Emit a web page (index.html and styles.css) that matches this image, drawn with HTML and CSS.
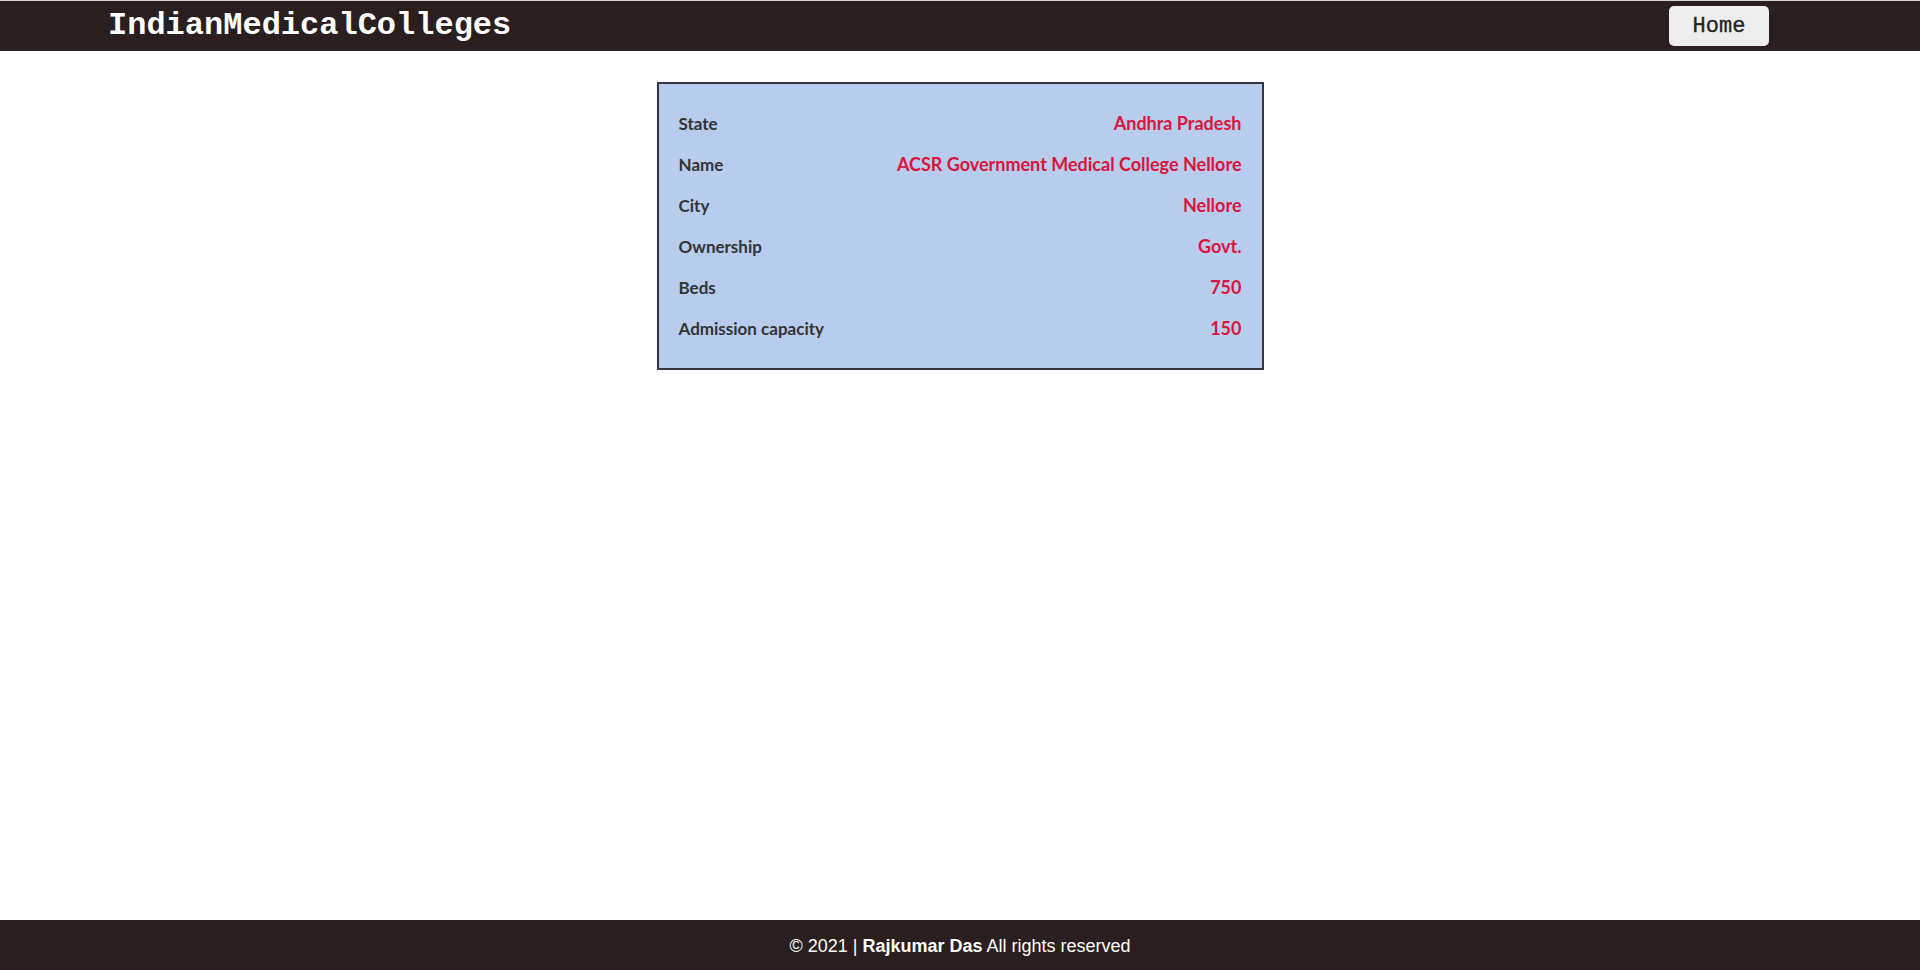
FILE: index.html
```html
<!DOCTYPE html>
<html lang="en">
<head>
<meta charset="utf-8">
<title>IndianMedicalColleges</title>
<link rel="stylesheet" href="styles.css">
</head>
<body>
<header class="topbar">
  <a class="brand" href="#">IndianMedicalColleges</a>
  <a class="home-btn" href="#">Home</a>
</header>
<main class="content">
  <section class="card">
    <div class="row"><span class="label">State</span><span class="value">Andhra Pradesh</span></div>
    <div class="row"><span class="label">Name</span><span class="value">ACSR Government Medical College Nellore</span></div>
    <div class="row"><span class="label">City</span><span class="value">Nellore</span></div>
    <div class="row"><span class="label">Ownership</span><span class="value">Govt.</span></div>
    <div class="row"><span class="label">Beds</span><span class="value">750</span></div>
    <div class="row"><span class="label">Admission capacity</span><span class="value">150</span></div>
  </section>
</main>
<footer class="footer">
  <p>© 2021 | <strong>Rajkumar Das</strong> All rights reserved</p>
</footer>
</body>
</html>
```
FILE: styles.css
```css
* { box-sizing: border-box; }
html, body { margin: 0; padding: 0; }
body {
  min-height: 100vh;
  display: flex;
  flex-direction: column;
  background: #ffffff;
  font-family: "Liberation Sans", Arial, sans-serif;
}
.topbar {
  height: 51px;
  background: #2a1e1e;
  border-top: 1px solid #d4d4d4;
  display: flex;
  align-items: center;
  justify-content: space-between;
  padding: 0 151px 0 108px;
}
.brand {
  font-family: "Liberation Mono", "Courier New", monospace;
  font-weight: bold;
  font-size: 32px;
  color: #ffffff;
  text-decoration: none;
  line-height: 1;
}
.home-btn {
  width: 100px;
  height: 40px;
  background: #eeeeee;
  border-radius: 5px;
  display: flex;
  align-items: center;
  justify-content: center;
  font-family: "Liberation Mono", "Courier New", monospace;
  font-size: 22px;
  color: #222222;
  text-decoration: none;
  -webkit-text-stroke: 0.3px #222;
}
.content {
  flex: 1;
  display: flex;
  justify-content: center;
  align-items: flex-start;
  padding-top: 31px;
}
.card {
  width: 607px;
  background: #b8ccee;
  border: 2px solid #37343f;
  padding: 18px 20px 20px 20px;
  display: flex;
  flex-direction: column;
}
.row {
  height: 41px;
  display: flex;
  justify-content: space-between;
  align-items: center;
  font-family: Lato, "Open Sans", sans-serif;
  font-weight: bold;
}
.label {
  font-size: 17px;
  color: #333333;
  padding-top: 2px;
}
.value {
  font-size: 18px;
  color: #dc143c;
}
.footer {
  height: 50px;
  background: #2a1e1e;
  color: #ffffff;
  display: flex;
  align-items: center;
  justify-content: center;
}
.footer p {
  margin: 0;
  font-size: 18px;
  padding-top: 3px;
}
```
